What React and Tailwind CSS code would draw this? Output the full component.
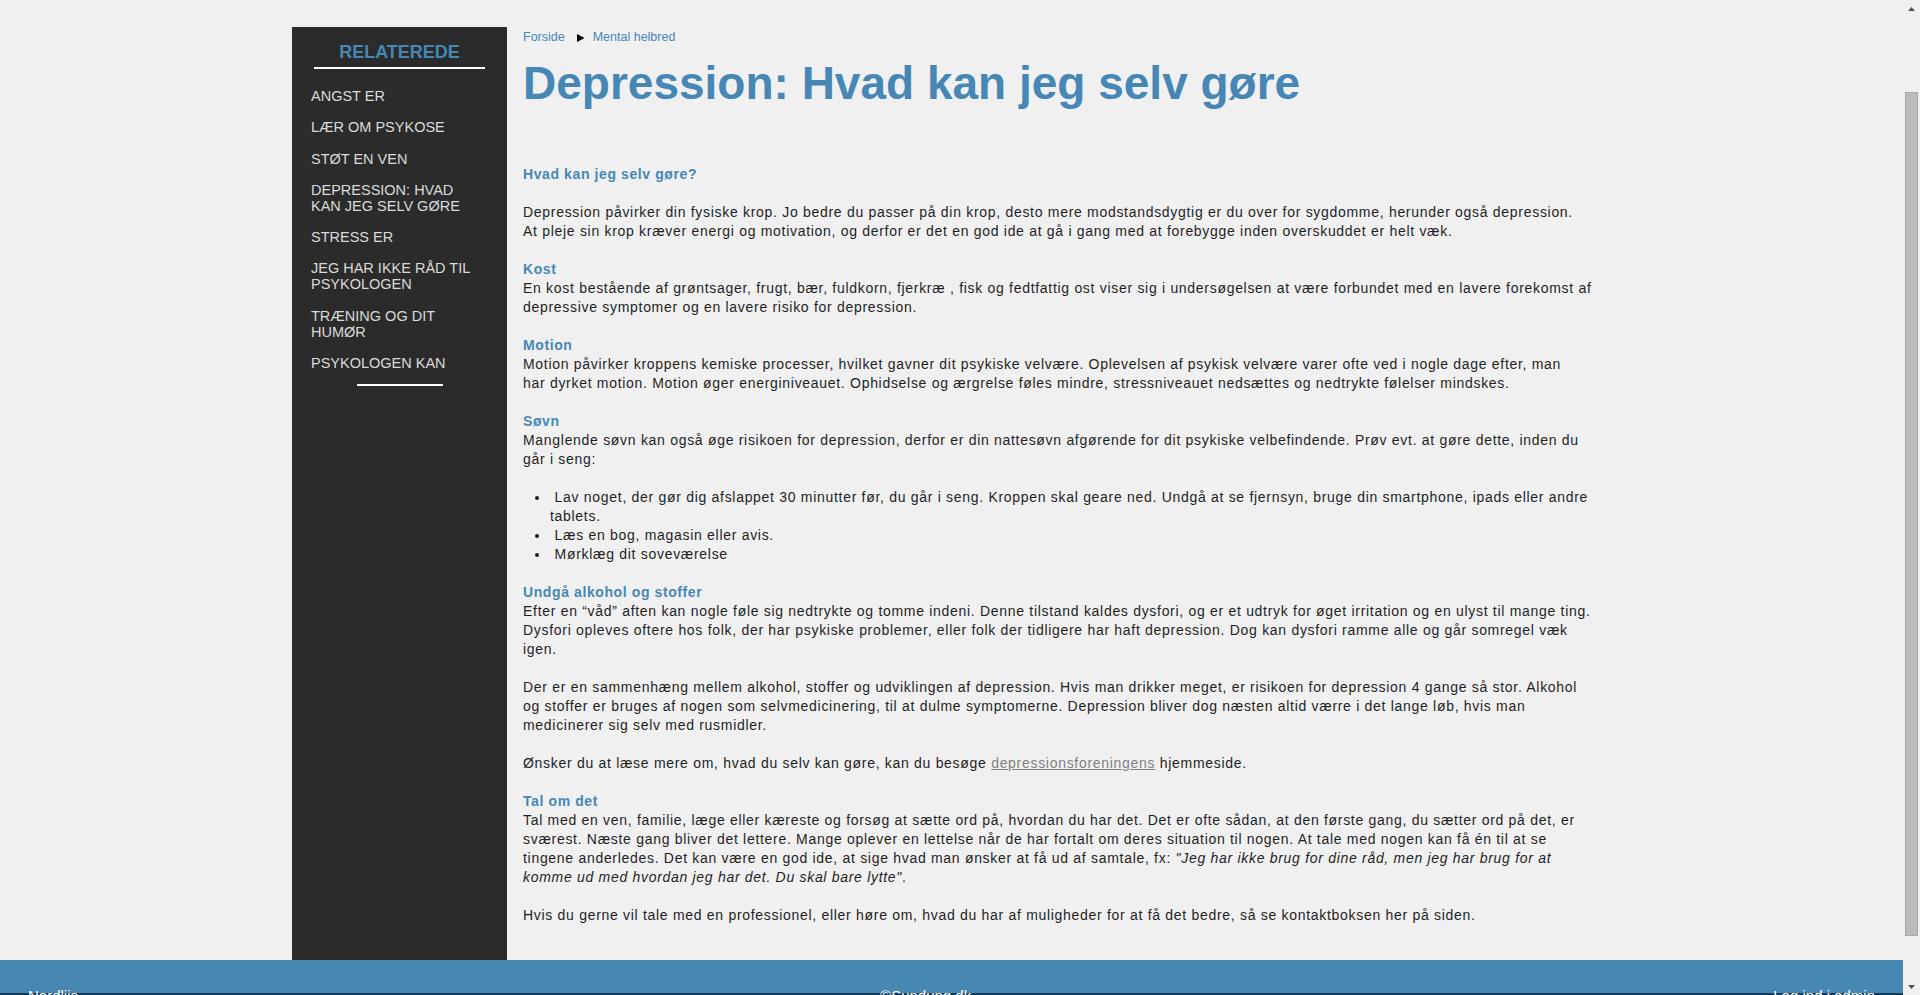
import React from 'react';

const relaterede = [
    'Angst er',
    'Lær om psykose',
    'Støt en ven',
    'Depression: Hvad kan jeg selv gøre',
    'Stress er',
    'Jeg har ikke råd til psykologen',
    'Træning og dit humør',
    'Psykologen kan',
];

function Sidebar() {
    return (
        <aside className="mt-[27px] w-[215px] shrink-0 bg-[#2b2b2b] pt-[15px]">
            <h3 className="text-center text-[18px] font-bold leading-[20px] text-[#4787b5]">RELATEREDE</h3>
            <div className="mx-[22px] mt-[5px] h-[2px] bg-white" />
            <ul className="mt-[19px] flex flex-col gap-[15.3px] pl-[19px] pr-[30px]">
                {relaterede.map((r) => (
                    <li key={r} className="text-[14.5px] uppercase leading-[16px] text-[#dadada]">
                        {r}
                    </li>
                ))}
            </ul>
            <div className="mx-auto mt-[13px] h-[2px] w-[86px] bg-white" />
        </aside>
    );
}

function Heading({ children }) {
    return <div className="font-bold tracking-[0.6px] text-[#4787b5]">{children}</div>;
}

function Content() {
    return (
        <main className="pl-[16px] pt-[30px]">
            <div className="flex items-center text-[12.5px] leading-[15px] text-[#4787b5]">
                <span>Forside</span>
                <svg className="ml-[12px] mr-[8px]" width="8" height="8" viewBox="0 0 8 8">
                    <polygon points="0,0 7.5,4 0,8" fill="#000" />
                </svg>
                <span>Mental helbred</span>
            </div>
            <h1 className="mt-[15px] text-[46px] font-bold leading-[46px] text-[#4787b5]">
                Depression: Hvad kan jeg selv gøre
            </h1>

            {/* linjeskift sat som i originalen */}
            <div className="mt-[59px] w-[1077px] text-[14px] leading-[19px] tracking-[0.7px] text-[#1f1f1f]">
                <div className="mb-[19px]">
                    <Heading>Hvad kan jeg selv gøre?</Heading>
                </div>
                <p className="mb-[19px]">
                    Depression påvirker din fysiske krop. Jo bedre du passer på din krop, desto mere modstandsdygtig er du over for sygdomme, herunder også depression.
                    <br />
                    At pleje sin krop kræver energi og motivation, og derfor er det en god ide at gå i gang med at forebygge inden overskuddet er helt væk.
                </p>
                <div className="mb-[19px]">
                    <Heading>Kost</Heading>
                    <p>
                        En kost bestående af grøntsager, frugt, bær, fuldkorn, fjerkræ , fisk og fedtfattig ost viser sig i undersøgelsen at være forbundet med en lavere forekomst af depressive symptomer og en lavere risiko for depression.
                    </p>
                </div>
                <div className="mb-[19px]">
                    <Heading>Motion</Heading>
                    <p>
                        Motion påvirker kroppens kemiske processer, hvilket gavner dit psykiske velvære. Oplevelsen af psykisk velvære varer ofte ved i nogle dage efter, man
                        <br />
                        har dyrket motion. Motion øger energiniveauet. Ophidselse og ærgrelse føles mindre, stressniveauet nedsættes og nedtrykte følelser mindskes.
                    </p>
                </div>
                <div>
                    <Heading>Søvn</Heading>
                    <p>
                        Manglende søvn kan også øge risikoen for depression, derfor er din nattesøvn afgørende for dit psykiske velbefindende. Prøv evt. at gøre dette, inden du går i seng:
                    </p>
                </div>
                <ul className="my-[19px] list-disc pl-[27px]">
                    <li>{'\u00a0'}Lav noget, der gør dig afslappet 30 minutter før, du går i seng. Kroppen skal geare ned. Undgå at se fjernsyn, bruge din smartphone, ipads eller andre tablets.</li>
                    <li>{'\u00a0'}Læs en bog, magasin eller avis.</li>
                    <li>{'\u00a0'}Mørklæg dit soveværelse</li>
                </ul>
                <div className="mb-[19px]">
                    <Heading>Undgå alkohol og stoffer</Heading>
                    <p>
                        Efter en “våd” aften kan nogle føle sig nedtrykte og tomme indeni. Denne tilstand kaldes dysfori, og er et udtryk for øget irritation og en ulyst til mange ting. Dysfori opleves oftere hos folk, der har psykiske problemer, eller folk der tidligere har haft depression. Dog kan dysfori ramme alle og går somregel væk igen.
                    </p>
                </div>
                <p className="mb-[19px]">
                    Der er en sammenhæng mellem alkohol, stoffer og udviklingen af depression. Hvis man drikker meget, er risikoen for depression 4 gange så stor. Alkohol
                    <br />
                    og stoffer er bruges af nogen som selvmedicinering, til at dulme symptomerne. Depression bliver dog næsten altid værre i det lange løb, hvis man
                    <br />
                    medicinerer sig selv med rusmidler.
                </p>
                <p className="mb-[19px]">
                    Ønsker du at læse mere om, hvad du selv kan gøre, kan du besøge{' '}
                    <a href="#" className="text-[#808080] underline">depressionsforeningens</a> hjemmeside.
                </p>
                <div className="mb-[19px]">
                    <Heading>Tal om det</Heading>
                    <p>
                        Tal med en ven, familie, læge eller kæreste og forsøg at sætte ord på, hvordan du har det. Det er ofte sådan, at den første gang, du sætter ord på det, er sværest. Næste gang bliver det lettere. Mange oplever en lettelse når de har fortalt om deres situation til nogen. At tale med nogen kan få én til at se tingene anderledes. Det kan være en god ide, at sige hvad man ønsker at få ud af samtale, fx:{' '}
                        <em>"Jeg har ikke brug for dine råd, men jeg har brug for at komme ud med hvordan jeg har det. Du skal bare lytte"</em>.
                    </p>
                </div>
                <p>
                    Hvis du gerne vil tale med en professionel, eller høre om, hvad du har af muligheder for at få det bedre, så se kontaktboksen her på siden.
                </p>
            </div>
        </main>
    );
}

function Scrollbar() {
    return (
        <div className="flex w-[17px] shrink-0 flex-col bg-[#f0f0f0]">
            <div className="flex h-[17px] items-center justify-center">
                <svg width="7" height="4" viewBox="0 0 7 4">
                    <polygon points="3.5,0 7,4 0,4" fill="#505050" />
                </svg>
            </div>
            <div className="flex-1 pt-[75px]">
                <div className="ml-[2px] h-[844px] w-[13px] border border-[#a8a8a8] bg-[#bcbcbc]" />
            </div>
            <div className="flex h-[17px] items-center justify-center">
                <svg width="7" height="4" viewBox="0 0 7 4">
                    <polygon points="0,0 7,0 3.5,4" fill="#505050" />
                </svg>
            </div>
        </div>
    );
}

export default function App() {
    return (
        <div className="flex h-[995px] overflow-hidden bg-[#f0f0f0] font-['Liberation_Sans',Arial,sans-serif]">
            <div className="flex min-w-0 flex-1 flex-col">
                <div className="mx-auto flex min-h-0 w-[1319px] flex-1">
                    <Sidebar />
                    <Content />
                </div>
                <footer className="h-[35px] shrink-0">
                    <div className="h-[33px] bg-[#4788b3]">
                        <div className="flex justify-between px-[28px] pt-[28px] text-[15px] leading-none text-white">
                            <span>Nordlijs</span>
                            <span>©Sundung.dk</span>
                            <span>Log ind i admin</span>
                        </div>
                    </div>
                    <div className="h-[2px] bg-[#0e3a5c]" />
                </footer>
            </div>
            <Scrollbar />
        </div>
    );
}
